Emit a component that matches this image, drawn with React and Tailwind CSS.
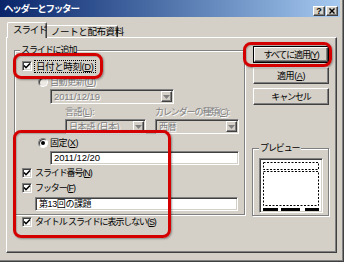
import React from "react";

const sunken =
  "border border-t-[#808080] border-l-[#808080] border-b-white border-r-white shadow-[inset_1px_1px_0_#404040,inset_-1px_-1px_0_#d4d0c8]";
const raised =
  "border border-t-white border-l-white border-b-[#404040] border-r-[#404040] shadow-[inset_-1px_-1px_0_#808080]";
const dis = "text-[#808080] [text-shadow:1px_1px_0_#fff]";
const num = "tracking-[-0.1px] text-[9.5px]";
const kanji = "tracking-[-0.4px]";

function Check() {
  return (
    <span className={`w-[10px] h-[10px] bg-white ${sunken} flex items-center justify-center shrink-0`}>
      <svg width="8" height="8" viewBox="0 0 8 8">
        <path d="M1 3.5 L3 5.7 L7 1.5" stroke="#000" strokeWidth="1.6" fill="none" />
      </svg>
    </span>
  );
}

function Radio({ checked, disabled }) {
  return (
    <span
      className={`w-[10px] h-[10px] rounded-full ${disabled ? "bg-[#ece9e4]" : "bg-white"} border border-t-[#808080] border-l-[#808080] border-b-white border-r-white shadow-[inset_1px_1px_0_#404040] flex items-center justify-center shrink-0`}
    >
      {checked && <span className="w-[4px] h-[4px] rounded-full bg-black" />}
    </span>
  );
}

function Combo({ text, className, tr }) {
  return (
    <div className={`${className} h-[15px] shrink-0 ${sunken} bg-[#d4d0c8] flex items-center justify-between pl-[3px] pr-[1px]`}>
      <span className={`${dis} ${tr} whitespace-nowrap`}>{text}</span>
      <span className={`w-[11px] h-[11px] ${raised} bg-[#d4d0c8] flex items-center justify-center`}>
        <svg width="7" height="4" viewBox="0 0 7 4">
          <path d="M0 0h7L3.5 4z" fill="#808080" />
        </svg>
      </span>
    </div>
  );
}

function K({ t, k, after = "" }) {
  return (
    <>
      {t}(<u>{k}</u>){after}
    </>
  );
}

function Btn({ children, def }) {
  const inner = (
    <div className={`w-full h-full ${raised} bg-[#d4d0c8] flex items-center justify-center whitespace-nowrap`}>{children}</div>
  );
  return def ? (
    <div className="w-[76px] h-[17px] border border-black ml-[1px]">{inner}</div>
  ) : (
    <div className="w-[76px] h-[17px] ml-[1px]">{inner}</div>
  );
}

function Red({ className }) {
  return (
    <div
      className={`absolute ${className} border-[3px] border-[#d40000] rounded-[8px] shadow-[1px_1px_2px_rgba(0,0,0,0.35),inset_1px_1px_1px_rgba(0,0,0,0.2)]`}
    />
  );
}

export default function App() {
  return (
    <div className="relative w-[344px] h-[262px] overflow-hidden bg-[#d4d0c8] flex flex-col text-[9px] tracking-[-1.1px] leading-[12px] whitespace-nowrap text-black font-['Liberation_Sans','Noto_Sans_CJK_JP',sans-serif] shadow-[inset_-1px_-1px_0_#404040,inset_-2px_-2px_0_#808080]">
      {/* title bar */}
      <div className="w-[340px] h-[17px] shrink-0 bg-gradient-to-r from-[#0a246a] to-[#a6caf0] flex justify-between pl-[4px] pr-[2px]">
        <span className="text-white font-bold self-center text-[9.5px] tracking-[-1.2px]">ヘッダーとフッター</span>
        <div className="flex gap-[1px] self-end mb-[1px]">
          <span className={`w-[12px] h-[10px] ${raised} bg-[#d4d0c8] flex items-center justify-center text-[9px] leading-none font-bold tracking-normal`}>?</span>
          <span className={`w-[12px] h-[10px] ${raised} bg-[#d4d0c8] flex items-center justify-center`}>
            <svg width="6" height="6" viewBox="0 0 6 6">
              <path d="M0.5 0.5L5.5 5.5M5.5 0.5L0.5 5.5" stroke="#000" strokeWidth="1.4" />
            </svg>
          </span>
        </div>
      </div>

      <div className="pl-[6px] pt-[5px] w-[337px]">
        {/* tabs */}
        <div className="relative z-10 h-[16px] flex items-end pl-[1px]">
          <div className="h-[16px] w-[40px] bg-[#d4d0c8] border-t border-l border-r border-t-white border-l-white border-r-[#404040] rounded-t-[2px] shadow-[inset_-1px_0_0_#808080] flex items-center pl-[5px] pb-[1px] text-[9.5px]">
            スライド
          </div>
          <div className={`h-[12px] w-[71px] mb-[1px] bg-[#d4d0c8] border-t border-r border-t-white border-r-[#404040] rounded-tr-[2px] shadow-[inset_-1px_0_0_#808080] flex items-center pl-[4px] text-[9.5px] ${kanji}`}>
            ノートと配布資料
          </div>
        </div>

        {/* panel */}
        <div className="-mt-[1px] w-[331px] h-[216px] border border-t-white border-l-white border-r-[#404040] border-b-[#404040] shadow-[inset_-1px_-1px_0_#808080] flex">
          {/* left column */}
          <div className="w-[239px] shrink-0 pl-[7px] pt-[12px] flex flex-col">
            <div className="relative w-[231px] h-[165px] border border-[#808080] shadow-[inset_1px_1px_0_#fff,1px_1px_0_#fff] flex flex-col">
              <span className="absolute left-[5px] -top-[7px] px-[1px] bg-[#d4d0c8]">スライドに追加</span>

              <div className="mt-[8px] h-[14px] pl-[7px] flex items-center gap-[2px]">
                <Check />
                <span className={`border border-dotted border-black px-[1px] leading-[11px] text-[9.5px] ${kanji}`}>
                  <K t="日付と時刻" k="D" />
                </span>
              </div>

              <div className="mt-[2px] h-[14px] pl-[23px] flex items-center gap-[2px]">
                <Radio disabled />
                <span className={`${dis} ${kanji}`}>
                  <K t="自動更新" k="U" />
                </span>
              </div>

              <Combo text="2011/12/19" tr={num} className="ml-[35px] w-[124px]" />

              <div className={`mt-[2px] h-[12px] pl-[50px] flex items-center ${dis}`}>
                <span className={`w-[90px] shrink-0 ${kanji}`}>
                  <K t="言語" k="L" after=":" />
                </span>
                <span>
                  <K t="カレンダーの種類" k="C" after=":" />
                </span>
              </div>

              <div className="mt-[1px] pl-[50px] flex gap-[9px]">
                <Combo text="日本語 (日本)" tr={kanji} className="w-[81px]" />
                <Combo text="西暦" tr={kanji} className="w-[84px]" />
              </div>

              <div className="mt-[2px] h-[14px] pl-[23px] flex items-center gap-[2px]">
                <Radio checked />
                <span className={kanji}>
                  <K t="固定" k="X" />
                </span>
              </div>

              <div className={`mt-[1px] ml-[35px] w-[189px] h-[14px] bg-white ${sunken} flex items-center pl-[3px] ${num}`}>
                2011/12/20
              </div>

              <div className="mt-[1px] h-[14px] pl-[7px] flex items-center gap-[3px]">
                <Check />
                <span>
                  <K t="スライド番号" k="N" />
                </span>
              </div>

              <div className="mt-[1px] h-[14px] pl-[7px] flex items-center gap-[3px]">
                <Check />
                <span>
                  <K t="フッター" k="F" />
                </span>
              </div>

              <div className={`mt-[2px] ml-[20px] w-[203px] h-[14px] bg-white ${sunken} flex items-center pl-[3px] ${kanji}`}>
                第13回の課題
              </div>
            </div>

            <div className="h-[14px] pl-[8px] flex items-center gap-[3px]">
              <Check />
              <span>
                <K t="タイトル スライドに表示しない" k="S" />
              </span>
            </div>
          </div>

          {/* right column */}
          <div className="pl-[6px] pt-[8px] flex flex-col">
            <Btn def>
              <K t="すべてに適用" k="Y" />
            </Btn>
            <div className="mt-[4px]">
              <Btn>
                <span className={kanji}>
                  <K t="適用" k="A" />
                </span>
              </Btn>
            </div>
            <div className="mt-[4px]">
              <Btn>キャンセル</Btn>
            </div>

            <div className="relative mt-[43px] w-[77px] h-[68px] border border-[#808080] shadow-[inset_1px_1px_0_#fff,1px_1px_0_#fff]">
              <span className="absolute left-[6px] -top-[7px] px-[1px] bg-[#d4d0c8]">プレビュー</span>
              <div className={`mt-[9px] ml-[6px] w-[64px] h-[55px] bg-white ${sunken}`}>
                <svg width="62" height="53" viewBox="0 0 62 53" className="block">
                  <rect x="3.5" y="3.5" width="55" height="7" fill="none" stroke="#000" strokeWidth="1" strokeDasharray="2 1.5" />
                  <rect x="3.5" y="12.5" width="55" height="34" fill="none" stroke="#000" strokeWidth="1" strokeDasharray="2 1.5" />
                  <rect x="3" y="49" width="15" height="3" fill="#000" />
                  <rect x="21" y="49" width="19" height="3" fill="#000" />
                  <rect x="45" y="49" width="14" height="3" fill="#000" />
                </svg>
              </div>
            </div>
          </div>
        </div>
      </div>

      <Red className="left-[13px] top-[53px] w-[90px] h-[26px]" />
      <Red className="left-[13px] top-[130px] w-[158px] h-[108px]" />
      <Red className="left-[243px] top-[42px] w-[89px] h-[25px]" />
    </div>
  );
}
